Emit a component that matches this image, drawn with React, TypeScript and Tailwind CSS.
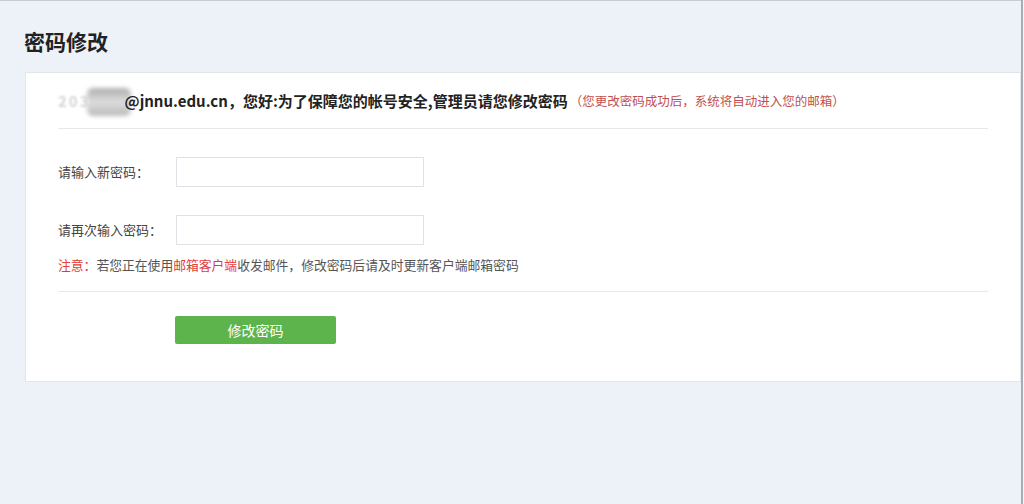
const cjk = "font-['Microsoft_YaHei','Noto_Sans_CJK_SC',sans-serif]";

export default function App() {
  return (
    <div className={`h-[504px] w-[1024px] overflow-hidden bg-white ${cjk}`}>
      <div className="flex h-full">
        <div className="flex h-full w-[1021px] flex-col border-t border-t-[#c9ccd1] bg-[#edf1f8] pt-[1px]">
          {/* Title */}
          <h1 className="pl-6 pt-[26px] text-[21px] font-bold leading-[26px] text-[#222]">密码修改</h1>

          {/* Card */}
          <div className="ml-[25px] mt-[18px] h-[310px] border border-[#e2e5ea] bg-white px-8">
            {/* Greeting */}
            <div className="flex h-[56px] items-center border-b border-b-[#e8e8e8] pt-[2px]">
              <span className="relative mr-[-6px] inline-flex items-center">
                <span className="text-[15px] font-bold tracking-[2px] text-[#d4d4d4] blur-[1px]">203</span>
                <span className="ml-[-4px] inline-block h-[28px] w-[44px] rounded-[6px] bg-gradient-to-b from-[#999] via-[#d6d6d6] to-[#a8a8a8] opacity-80 blur-[2px]" />
              </span>
              <span className="relative text-[15px] font-bold text-[#222]">
                @jnnu.edu.cn，您好:为了保障您的帐号安全,管理员请您修改密码
              </span>
              <span className="ml-[2px] text-[12.5px] text-[#c0504d]">
                （您更改密码成功后，系统将自动进入您的邮箱）
              </span>
            </div>

            {/* Fields */}
            <div className="flex flex-col pt-[28px]">
              <div className="flex items-center">
                <label className="w-[118px] text-[13px] text-[#444]">请输入新密码：</label>
                <input
                  type="password"
                  className="h-[30px] w-[248px] border border-[#dfe2e6] bg-white outline-none"
                />
              </div>
              <div className="mt-[28px] flex items-center">
                <label className="w-[118px] text-[13px] text-[#444]">请再次输入密码：</label>
                <input
                  type="password"
                  className="h-[30px] w-[248px] border border-[#dfe2e6] bg-white outline-none"
                />
              </div>
              <p className="mt-[11px] text-[12.8px] leading-[18px] text-[#555]">
                <span className="text-[#e0403a]">注意：</span>若您正在使用
                <span className="text-[#e0403a]">邮箱客户端</span>收发邮件，修改密码后请及时更新客户端邮箱密码
              </p>
            </div>

            <div className="mt-[17px] border-b border-b-[#e8e8e8]" />

            {/* Submit */}
            <div className="pl-[117px] pt-[24px]">
              <button className="h-[28px] w-[161px] rounded-[2px] bg-[#5db44c] text-[14px] text-white">
                修改密码
              </button>
            </div>
          </div>
        </div>
        <div className="h-full w-[2px] bg-[#a9adb3]" />
        <div className="h-full flex-1 bg-[#f4f6f8]" />
      </div>
    </div>
  );
}
